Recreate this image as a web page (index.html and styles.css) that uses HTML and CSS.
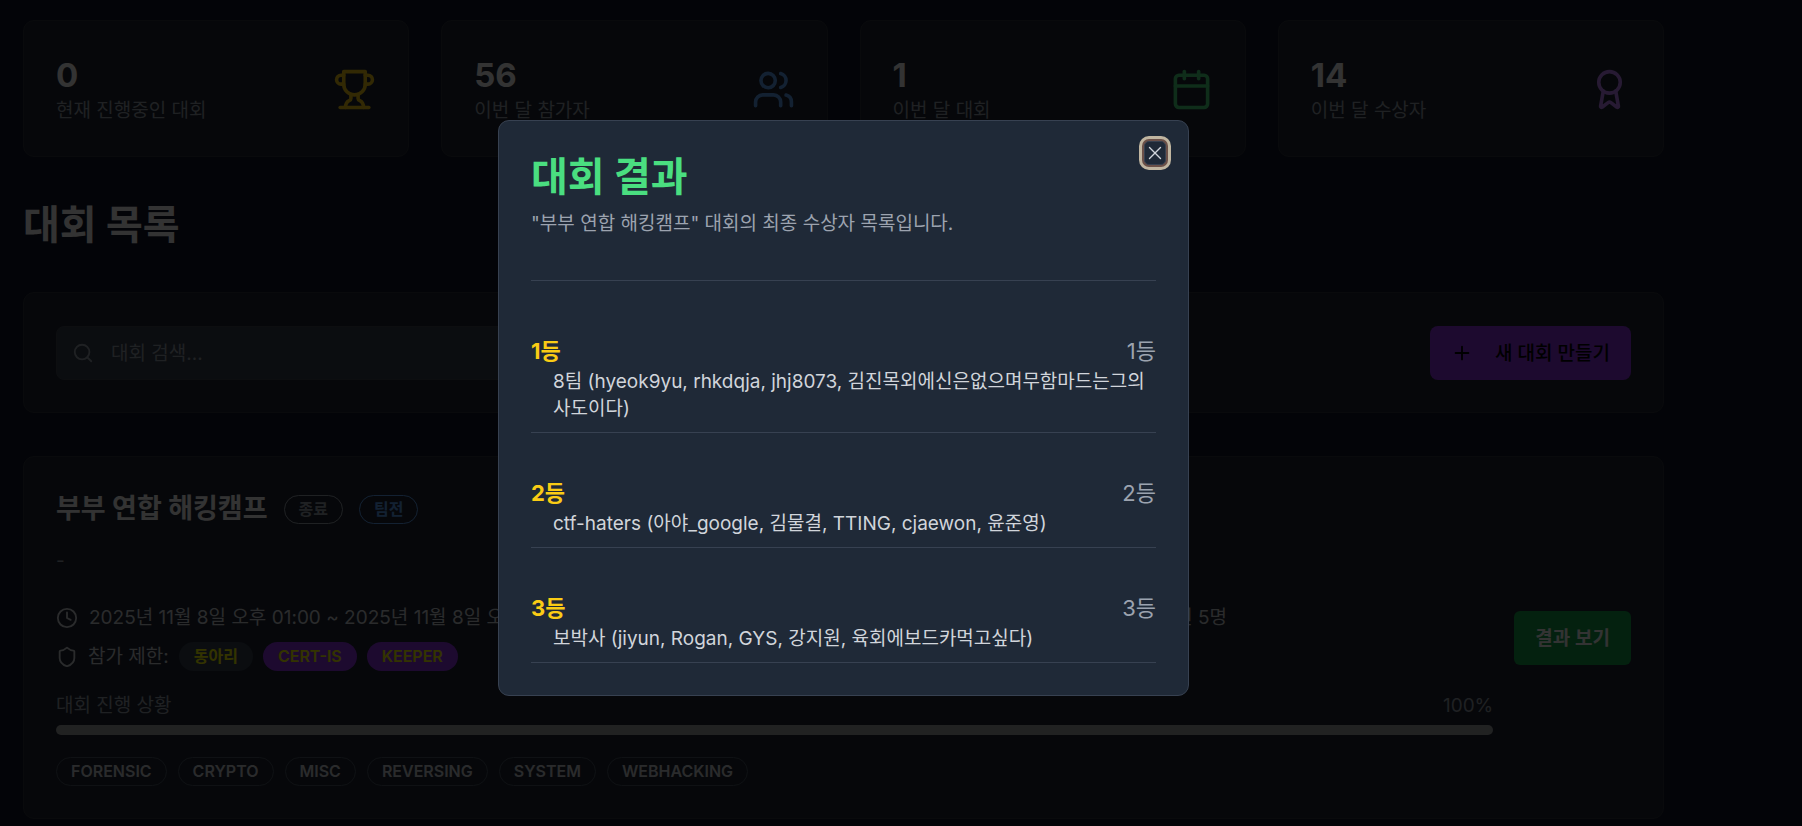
FILE: index.html
```html
<!DOCTYPE html>
<html lang="ko">
<head>
<meta charset="utf-8">
<title>대회 목록</title>
<link rel="stylesheet" href="styles.css">
</head>
<body>
<main class="page">
  <section class="stats">
    <article class="card stat">
      <div><div class="stat-value">0</div><div class="stat-label">현재 진행중인 대회</div></div>
      <svg class="icon icon-lg yellow" viewBox="0 0 24 24"><path d="M6 9H4.5a2.5 2.5 0 0 1 0-5H6"/><path d="M18 9h1.500a2.500 2.500 0 0 0 0-5H18"/><path d="M4 22h16"/><path d="M10 14.660V17c0 .55-.47.98-.97 1.210C7.850 18.750 7 20.240 7 22"/><path d="M14 14.660V17c0 .55.47.98.97 1.210C16.150 18.750 17 20.240 17 22"/><path d="M18 2H6v7a6 6 0 0 0 12 0V2Z"/></svg>
    </article>
    <article class="card stat">
      <div><div class="stat-value">56</div><div class="stat-label">이번 달 참가자</div></div>
      <svg class="icon icon-lg blue" viewBox="0 0 24 24"><path d="M16 21v-2a4 4 0 0 0-4-4H6a4 4 0 0 0-4 4v2"/><circle cx="9" cy="7" r="4"/><path d="M22 21v-2a4 4 0 0 0-3-3.870"/><path d="M16 3.130a4 4 0 0 1 0 7.750"/></svg>
    </article>
    <article class="card stat">
      <div><div class="stat-value">1</div><div class="stat-label">이번 달 대회</div></div>
      <svg class="icon icon-lg green" viewBox="0 0 24 24"><path d="M8 2v4"/><path d="M16 2v4"/><rect width="18" height="18" x="3" y="4" rx="2"/><path d="M3 10h18"/></svg>
    </article>
    <article class="card stat">
      <div><div class="stat-value">14</div><div class="stat-label">이번 달 수상자</div></div>
      <svg class="icon icon-lg purple" viewBox="0 0 24 24"><path d="m15.477 12.890 1.515 8.526a.5.5 0 0 1-.81.47l-3.580-2.687a1 1 0 0 0-1.197 0l-3.586 2.686a.5.5 0 0 1-.81-.469l1.514-8.526"/><circle cx="12" cy="8" r="6"/></svg>
    </article>
  </section>

  <h1 class="heading">대회 목록</h1>

  <section class="card toolbar">
    <label class="search">
      <svg class="icon search-icon" viewBox="0 0 24 24"><circle cx="11" cy="11" r="8"/><path d="m21 21-4.300-4.300"/></svg>
      <input class="search-input" type="text" placeholder="대회 검색..." aria-label="대회 검색">
    </label>
    <button class="button create" type="button">
      <svg class="icon" viewBox="0 0 24 24"><path d="M5 12h14"/><path d="M12 5v14"/></svg>
      새 대회 만들기
    </button>
  </section>

  <article class="card contest">
    <div class="contest-body">
      <div class="contest-title">
        <h2 class="contest-name">부부 연합 해킹캠프</h2>
        <span class="badge ended">종료</span>
        <span class="badge team">팀전</span>
      </div>
      <p class="contest-desc">-</p>
      <div class="meta">
        <div class="meta-item"><svg class="icon" viewBox="0 0 24 24"><circle cx="12" cy="12" r="10"/><path d="M12 6v6l4 2"/></svg>2025년 11월 8일 오후 01:00 ~ 2025년 11월 8일 오후 06:00</div>
        <div class="meta-item"><svg class="icon" viewBox="0 0 24 24"><path d="M16 21v-2a4 4 0 0 0-4-4H6a4 4 0 0 0-4 4v2"/><circle cx="9" cy="7" r="4"/></svg>팀당 최대 인원 5명</div>
      </div>
      <div class="limits">
        <svg class="icon" viewBox="0 0 24 24"><path d="M20 13c0 5-3.500 7.500-7.660 8.950a1 1 0 0 1-.67-.010C7.500 20.500 4 18 4 13V6a1 1 0 0 1 1-1c2 0 4.500-1.200 6.240-2.720a1.170 1.170 0 0 1 1.520 0C14.510 3.810 17 5 19 5a1 1 0 0 1 1 1z"/></svg>
        <span>참가 제한:</span>
        <span class="badge club">동아리</span>
        <span class="badge group">CERT-IS</span>
        <span class="badge group">KEEPER</span>
      </div>
      <div class="progress-head"><span>대회 진행 상황</span><span>100%</span></div>
      <div class="progress" role="progressbar" aria-valuenow="100"></div>
      <div class="tags">
        <span class="badge tag">FORENSIC</span>
        <span class="badge tag">CRYPTO</span>
        <span class="badge tag">MISC</span>
        <span class="badge tag">REVERSING</span>
        <span class="badge tag">SYSTEM</span>
        <span class="badge tag">WEBHACKING</span>
      </div>
    </div>
    <button class="button results" type="button">결과 보기</button>
  </article>
</main>

<div class="overlay">
  <section class="modal" role="dialog" aria-labelledby="modal-title">
    <button class="close" type="button" aria-label="닫기"><svg class="icon" viewBox="0 0 24 24"><path d="M18 6 6 18"/><path d="m6 6 12 12"/></svg></button>
    <header class="modal-head">
      <h2 class="modal-title" id="modal-title">대회 결과</h2>
      <p class="modal-desc">"부부 연합 해킹캠프" 대회의 최종 수상자 목록입니다.</p>
    </header>
    <ol class="ranks">
      <li class="rank"><div class="rank-row"><strong class="place">1등</strong><span class="prize">1등</span></div><p class="members">8팀 (hyeok9yu, rhkdqja, jhj8073, 김진목외에신은없으며무함마드는그의사도이다)</p></li>
      <li class="rank"><div class="rank-row"><strong class="place">2등</strong><span class="prize">2등</span></div><p class="members">ctf-haters (아야_google, 김물결, TTING, cjaewon, 윤준영)</p></li>
      <li class="rank"><div class="rank-row"><strong class="place">3등</strong><span class="prize">3등</span></div><p class="members">보박사 (jiyun, Rogan, GYS, 강지원, 육회에보드카먹고싶다)</p></li>
    </ol>
  </section>
</div>
</body>
</html>
```

FILE: styles.css
```css
* { box-sizing: border-box; }

body {
  margin: 0;
  min-height: 100vh;
  overflow: hidden;
  background: #0f1428;
  color: #fff;
  font-family: Inter, "Noto Sans CJK KR", sans-serif;
  font-size: 19px;
  line-height: 27px;
}

h1, h2, p, ol { margin: 0; padding: 0; }
ol { list-style: none; }

.page { padding: 20px 138px 8px 23px; }

.card {
  background: #1f2633;
  border: 1px solid #30353e;
  border-radius: 11px;
  padding: 33px 32px 32px;
}

.icon {
  flex: none;
  width: 22px;
  height: 22px;
  fill: none;
  stroke: currentColor;
  stroke-width: 2;
  stroke-linecap: round;
  stroke-linejoin: round;
}
.icon-lg { width: 43px; height: 43px; }

.stats { display: grid; grid-template-columns: repeat(4, 1fr); gap: 32px; }
.stat { display: flex; align-items: center; justify-content: space-between; }
.stat-value { font-size: 33px; font-weight: 700; line-height: 43px; }
.stat-label { color: #9ca3af; }
.yellow { color: #facc15; }
.blue { color: #60a5fa; }
.green { color: #4ade80; }
.purple { color: #c084fc; }

.heading { margin: 43px 0; font-size: 40px; font-weight: 700; line-height: 49px; }

.toolbar { display: flex; align-items: center; justify-content: space-between; }
.search { position: relative; flex: 0 1 50%; }
.search-icon { position: absolute; left: 16px; top: 16px; color: #9ca3af; }
.search-input {
  display: block;
  width: 100%;
  height: 54px;
  padding: 0 16px 0 54px;
  border: 1px solid #414651;
  border-radius: 8px;
  background: #374151;
  color: #fff;
  font: inherit;
}
.search-input::placeholder { color: #9ca3af; opacity: 1; }

.button {
  display: flex;
  align-items: center;
  height: 54px;
  padding: 0 21px;
  border: 0;
  border-radius: 6px;
  font: inherit;
  font-weight: 500;
}
.create { gap: 22px; border-radius: 8px; background: #9333ea; color: #000; }
.results { background: #16a34a; color: #fff; font-weight: 600; }

.contest { display: flex; align-items: center; gap: 21px; margin-top: 43px; }
.contest-body { flex: 1; }
.contest-title { display: flex; align-items: center; gap: 16px; }
.contest-name { font-size: 27px; font-weight: 700; line-height: 38px; }
.contest-desc { margin: 19px 0 30px; color: #9ca3af; }

.badge {
  border: 1px solid transparent;
  border-radius: 15px;
  padding: 0 14px;
  font-size: 16px;
  font-weight: 600;
  line-height: 27px;
}
.ended { border-color: #9ca3af; color: #9ca3af; }
.team { border-color: #60a5fa; color: #60a5fa; }
.club { background: #374151; color: #ff0; }
.group { background: #9333ea; color: #ff0; }
.tag { border-color: #4b5563; color: #d1d5db; }

.meta { display: grid; grid-template-columns: 11fr 5fr; color: #d1d5db; }
.meta-item { display: flex; align-items: center; gap: 11px; }
.limits { display: flex; align-items: center; gap: 10px; margin-top: 11px; color: #d1d5db; }

.progress-head { display: flex; justify-content: space-between; margin-top: 21px; color: #9ca3af; }
.progress { height: 10px; margin: 6px 0 22px; border-radius: 5px; background: #a5a8ab; }
.tags { display: flex; flex-wrap: wrap; gap: 11px; }

.overlay {
  position: fixed;
  inset: 0;
  display: flex;
  align-items: center;
  justify-content: center;
  padding: 0 115px 10px 0;
  background: rgba(0, 0, 0, 0.8);
}
.modal {
  position: relative;
  width: 691px;
  padding: 32px;
  border: 1px solid #374151;
  border-radius: 11px;
  background: #1f2937;
}
.close {
  position: absolute;
  top: 20px;
  right: 22px;
  display: flex;
  align-items: center;
  justify-content: center;
  width: 22px;
  height: 24px;
  padding: 0;
  border: 1px solid #374151;
  border-radius: 5px;
  background: #1f2937;
  color: #d1d5db;
  box-shadow: 0 0 0 2px #6b5048, 0 0 0 5px #c0b5a0;
}
.close .icon { stroke-width: 1.5; }
.modal-head { padding-bottom: 43px; border-bottom: 1px solid #374151; }
.modal-title { color: #4ade80; font-size: 40px; font-weight: 700; line-height: 47px; }
.modal-desc { margin-top: 10px; color: #9ca3af; }
.ranks { padding-top: 10px; }
.rank { padding: 44px 0 10px; border-bottom: 1px solid #374151; }
.rank-row { display: flex; justify-content: space-between; font-size: 22px; line-height: 33px; }
.place { color: #facc15; font-weight: 700; }
.prize { color: #9ca3af; }
.members { padding-left: 22px; color: #d1d5db; }
```
